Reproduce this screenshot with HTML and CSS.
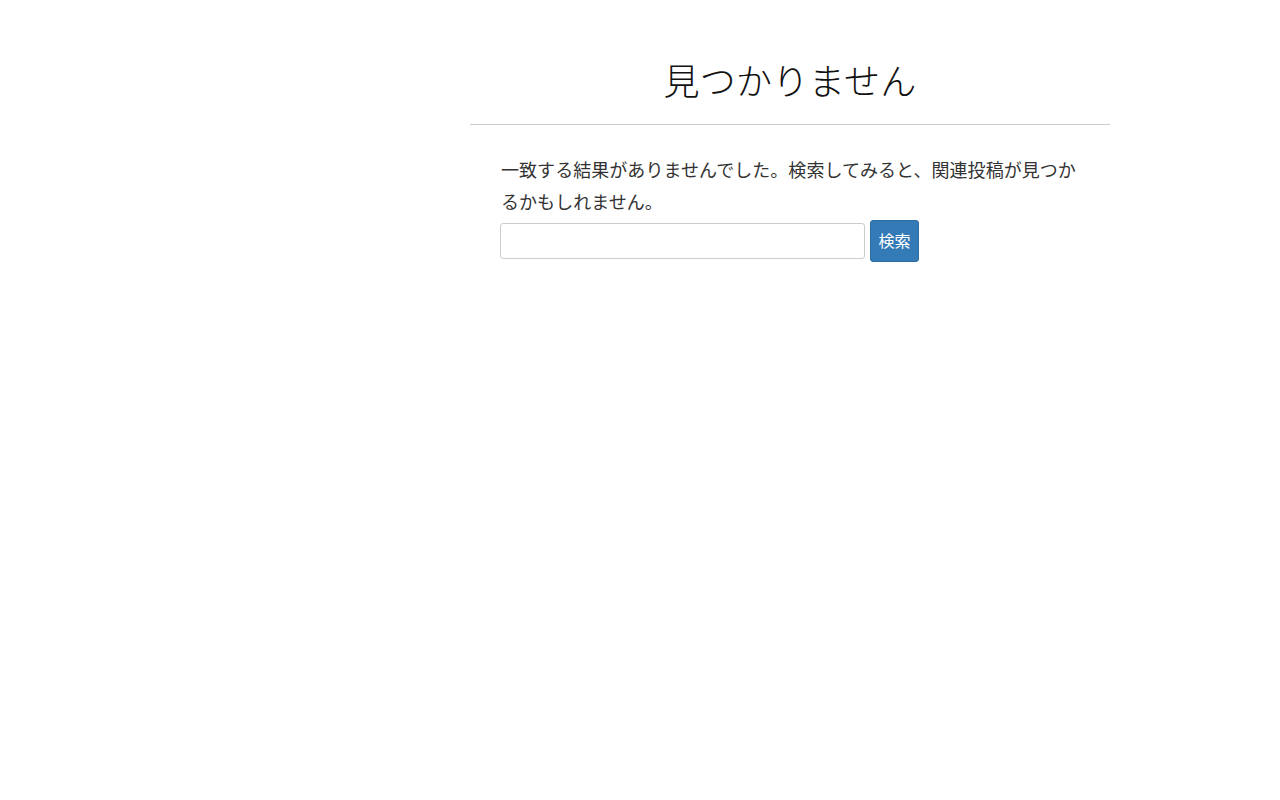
FILE: index.html
```html
<!DOCTYPE html>
<html lang="ja">
<head>
<meta charset="utf-8">
<title>見つかりません</title>
<link rel="stylesheet" href="styles.css">
</head>
<body>
<div class="layout">
  <div class="side"></div>
  <main class="main">
    <header class="page-header">
      <h1 class="page-title">見つかりません</h1>
    </header>
    <div class="page-content">
      <p class="message">一致する結果がありませんでした。検索してみると、関連投稿が見つかるかもしれません。</p>
      <form class="search-form" onsubmit="return false;">
        <input class="search-field" type="search" aria-label="検索">
        <button class="search-submit" type="submit">検索</button>
      </form>
    </div>
  </main>
</div>
</body>
</html>
```
FILE: styles.css
```css
html, body {
  margin: 0;
  padding: 0;
  background: #fff;
}
body {
  font-family: "Noto Sans CJK JP", "Noto Sans", sans-serif;
  color: #333;
}
.layout {
  display: grid;
  grid-template-columns: 470px 640px;
}
.page-header {
  padding-top: 57px;
  padding-bottom: 23px;
  border-bottom: 1px solid #cccccc;
}
.page-title {
  margin: 0;
  font-size: 36px;
  line-height: 44px;
  font-weight: 300;
  color: #111;
  text-align: center;
  letter-spacing: 0.3px;
}
.page-content {
  padding: 28px 30px 0 31px;
}
.message {
  margin: 0;
  font-size: 18px;
  line-height: 32px;
  letter-spacing: 0.05px;
}
.search-form {
  display: flex;
  align-items: center;
  gap: 5px;
  margin-top: 3px;
  margin-left: -1px;
}
.search-field {
  box-sizing: border-box;
  width: 365px;
  height: 36px;
  margin: 0;
  border: 1px solid #cccccc;
  border-radius: 3px;
  background: #fff;
  padding: 4px 8px;
  font: inherit;
}
.search-submit {
  box-sizing: border-box;
  height: 42px;
  margin: 0;
  padding: 0 7.5px 2px;
  white-space: nowrap;
  border: 1px solid #2e6da4;
  border-radius: 3px;
  background: #337ab7;
  color: #fff;
  font-family: "Noto Sans CJK JP", "Noto Sans", sans-serif;
  font-size: 16px;
  line-height: 26px;
}
```
